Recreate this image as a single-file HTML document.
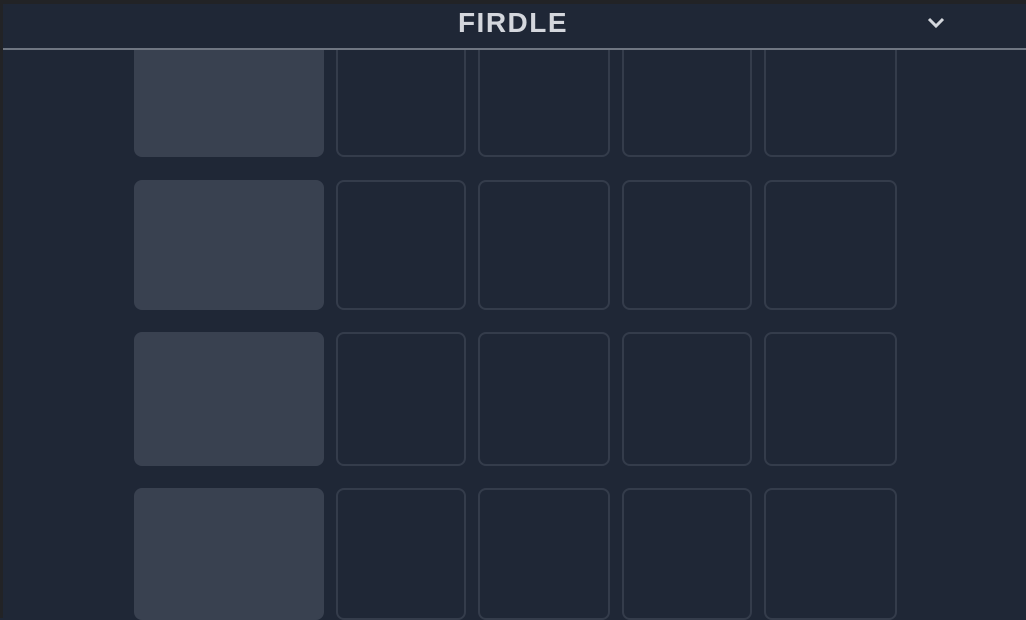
<!DOCTYPE html>
<html><head><style>
html,body{margin:0;padding:0;}
body{width:1026px;height:618px;background:#1f2736;position:relative;overflow:hidden;font-family:"Liberation Sans",sans-serif;}
.top{position:absolute;left:0;top:0;width:1026px;height:4px;background:#222326;}
.left{position:absolute;left:0;top:0;width:3px;height:618px;background:#222326;}
.t{position:absolute;box-sizing:border-box;border-radius:8px;}
.f{background:#394150;}
.e{border:2px solid #343c4b;}
.hdr{position:absolute;left:3px;top:4px;width:1023px;height:44px;background:#1f2736;z-index:2;}
.line{position:absolute;left:3px;top:48px;width:1023px;height:2px;background:#6f7682;z-index:3;}
.title{position:absolute;left:0;width:1026px;top:7px;text-align:center;font-weight:bold;font-size:28px;letter-spacing:1.5px;color:#d4d7dd;z-index:3;}
</style></head><body>
<div class="hdr"></div>
<div class="title">FIRDLE</div>
<svg style="position:absolute;left:927px;top:16px;z-index:3" width="18" height="14" viewBox="0 0 18 14"><path d="M2 3 L9 10 L16 3" stroke="#d4d7dd" stroke-width="3" fill="none"/></svg>
<div class="line"></div>
<div class="top"></div><div class="left"></div>

<div class="t f" style="left:134px;top:26px;width:190px;height:131px"></div>
<div class="t e" style="left:336px;top:26px;width:130px;height:131px"></div>
<div class="t e" style="left:478px;top:26px;width:132px;height:131px"></div>
<div class="t e" style="left:622px;top:26px;width:130px;height:131px"></div>
<div class="t e" style="left:764px;top:26px;width:133px;height:131px"></div>

<div class="t f" style="left:134px;top:180px;width:190px;height:130px"></div>
<div class="t e" style="left:336px;top:180px;width:130px;height:130px"></div>
<div class="t e" style="left:478px;top:180px;width:132px;height:130px"></div>
<div class="t e" style="left:622px;top:180px;width:130px;height:130px"></div>
<div class="t e" style="left:764px;top:180px;width:133px;height:130px"></div>

<div class="t f" style="left:134px;top:332px;width:190px;height:134px"></div>
<div class="t e" style="left:336px;top:332px;width:130px;height:134px"></div>
<div class="t e" style="left:478px;top:332px;width:132px;height:134px"></div>
<div class="t e" style="left:622px;top:332px;width:130px;height:134px"></div>
<div class="t e" style="left:764px;top:332px;width:133px;height:134px"></div>

<div class="t f" style="left:134px;top:488px;width:190px;height:132px"></div>
<div class="t e" style="left:336px;top:488px;width:130px;height:132px"></div>
<div class="t e" style="left:478px;top:488px;width:132px;height:132px"></div>
<div class="t e" style="left:622px;top:488px;width:130px;height:132px"></div>
<div class="t e" style="left:764px;top:488px;width:133px;height:132px"></div>
</body></html>
